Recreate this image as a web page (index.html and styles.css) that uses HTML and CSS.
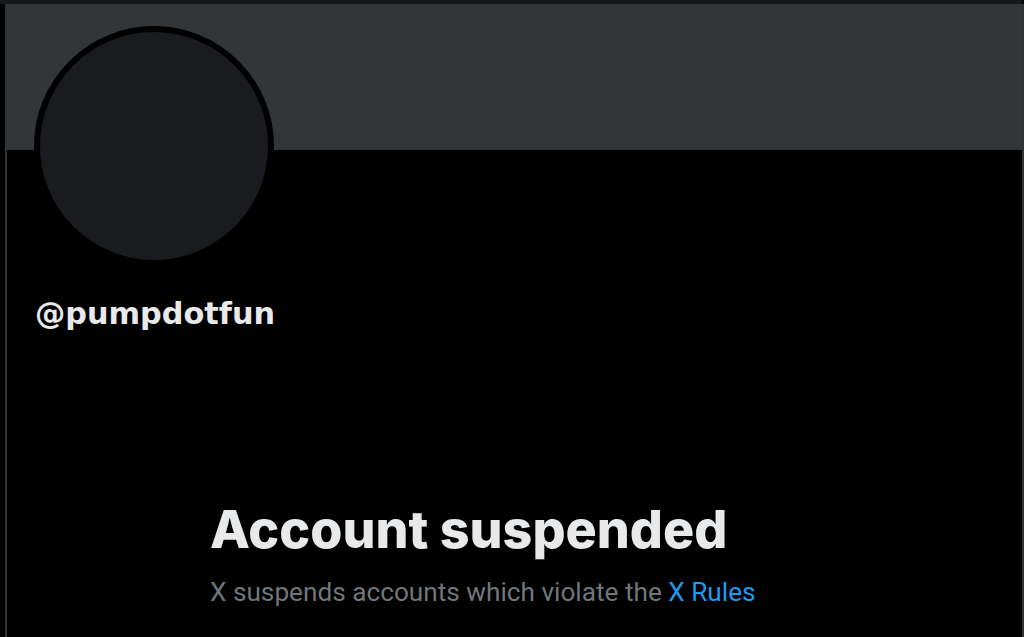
FILE: index.html
```html
<!DOCTYPE html>
<html>
<head>
<meta charset="utf-8">
<link rel="stylesheet" href="styles.css">
</head>
<body>
<div class="topbar"></div>
<div class="page">
  <main class="profile">
    <div class="banner"></div>
    <div class="avatar"></div>
    <div class="handle">@pumpdotfun</div>
    <section class="notice">
      <h1 class="notice-title">Account suspended</h1>
      <p class="notice-text">X suspends accounts which violate the <a class="notice-link" href="#">X Rules</a></p>
    </section>
  </main>
  <div class="edge"></div>
</div>
</body>
</html>
```
FILE: styles.css
```css
html, body {
  margin: 0;
  padding: 0;
  background: #000;
  height: 100%;
  overflow: hidden;
}
body {
  font-family: Inter, "Liberation Sans", Arial, sans-serif;
  color: #e7e9ea;
}
.topbar {
  height: 4px;
  width: 1022px;
  background: #16181c;
}
.page {
  display: flex;
  height: 633px;
}
.profile {
  flex: 1;
  margin-left: 5px;
  border-left: 2px solid #2f3336;
  display: flex;
  flex-direction: column;
}
.edge {
  width: 2px;
  background: #2f3336;
}
.banner {
  height: 146px;
  background: #333639;
}
.avatar {
  width: 228px;
  height: 228px;
  border-radius: 50%;
  background: #1a1b1e;
  border: 6px solid #000;
  margin-top: -124px;
  margin-left: 27px;
}
.handle {
  margin-top: 30px;
  margin-left: 28px;
  font-family: "DejaVu Sans", Inter, sans-serif;
  font-size: 30.3px;
  font-weight: 700;
  line-height: 36px;
}
.notice {
  margin-top: 168px;
  margin-left: 203px;
}
.notice-title {
  margin: 0;
  font-size: 52px;
  font-weight: 800;
  line-height: 60px;
}
.notice-text {
  margin: 16px 0 0;
  font-family: Roboto, "Liberation Sans", Arial, sans-serif;
  font-size: 26.2px;
  line-height: 32px;
  color: #71767b;
}
.notice-link {
  color: #1d9bf0;
  text-decoration: none;
}
```
